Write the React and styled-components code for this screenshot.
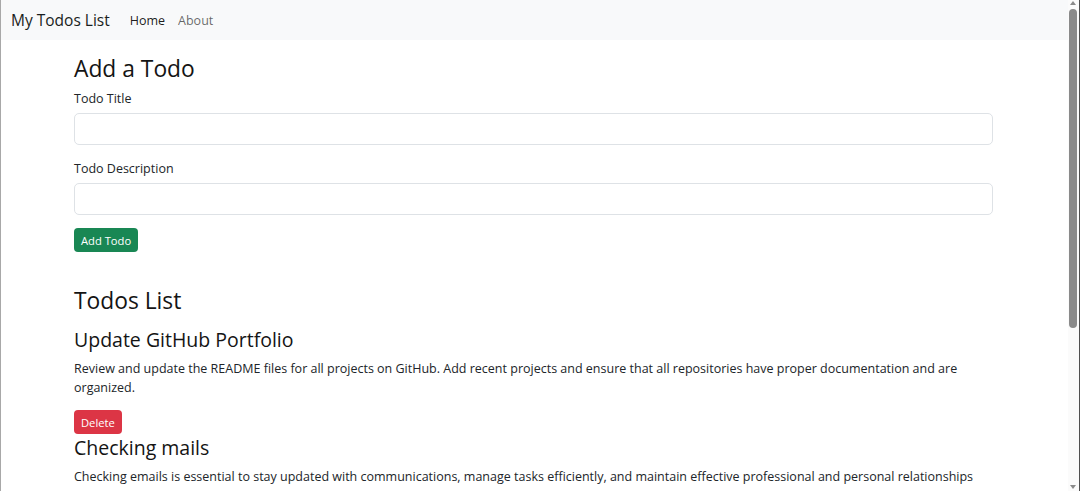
import React, { useState } from "react";
import styled, { createGlobalStyle } from "styled-components";

const GlobalStyle = createGlobalStyle`
  html, body {
    margin: 0;
    padding: 0;
    overflow: hidden;
  }
  body {
    font-family: "Open Sans", "Noto Sans", sans-serif;
    color: #212529;
    background: #ffffff;
  }
  * {
    box-sizing: border-box;
  }
`;

// window frame: page + fake scroll rail on the right
const Shell = styled.div`
  display: flex;
  width: 100vw;
  height: 100vh;
  border-left: 1px solid #a8a8a8;
  border-right: 1px solid #505050;
`;

const Page = styled.div`
  flex: 1;
  min-width: 0;
  overflow: hidden;
`;

const ScrollRail = styled.div`
  position: relative;
  width: 11px;
  background: #fbfbfb;
`;

const ScrollThumb = styled.div`
  position: absolute;
  left: 1px;
  top: 9px;
  width: 8px;
  height: 319px;
  border-radius: 4px;
  background: #8a8a8a;
`;

const ScrollArrow = styled.div`
  position: absolute;
  left: 2px;
  width: 0;
  height: 0;
  border-left: 3.5px solid transparent;
  border-right: 3.5px solid transparent;
  ${(p) =>
    p.$down
      ? "bottom: 2px; border-top: 4px solid #8a8a8a;"
      : "top: 1px; border-bottom: 4px solid #8a8a8a;"}
`;

const Navbar = styled.nav`
  height: 40px;
  background-color: #f8f9fa;
  display: flex;
  align-items: center;
  padding: 0 10px;
`;

const Brand = styled.a`
  font-size: 15.5px;
  color: #1a1d20;
  text-decoration: none;
  margin-right: 20px;
`;

const NavLinks = styled.div`
  display: flex;
  gap: 13px;
`;

const NavLink = styled.a`
  font-size: 12.5px;
  text-decoration: none;
  color: ${(p) => (p.$active ? "rgba(0, 0, 0, 0.9)" : "rgba(0, 0, 0, 0.6)")};
`;

const Body = styled.div`
  padding-right: 2px;
`;

const Container = styled.main`
  width: 919px;
  margin: 0 auto;
  padding-top: 15px;
`;

const Heading = styled.h3`
  font-size: 22.8px;
  font-weight: 500;
  line-height: 27px;
  color: #141414;
  margin: 0 0 ${(p) => p.$gap || 6}px;
`;

const FormGroup = styled.div`
  margin-bottom: ${(p) => p.$gap || 14}px;
`;

const Label = styled.label`
  display: block;
  font-size: 12.5px;
  line-height: 19px;
  margin-bottom: 5px;
`;

const Input = styled.input`
  display: block;
  width: 100%;
  height: 32px;
  border: 1px solid #dee2e6;
  border-radius: 5px;
  padding: 0 10px;
  font: inherit;
  font-size: 12.5px;
  outline: none;
`;

const Button = styled.button`
  display: block;
  height: 24px;
  padding: 0 7px;
  font-family: inherit;
  font-size: 11.2px;
  color: #ffffff;
  border: none;
  border-radius: 4px;
  cursor: pointer;
  background-color: ${(p) => (p.$variant === "danger" ? "#dc3545" : "#198754")};
`;

const ListSection = styled.section`
  margin-top: 35px;
`;

const TodoItem = styled.div`
  margin-bottom: 2px;
`;

const TodoTitle = styled.h4`
  font-size: 19.5px;
  font-weight: 500;
  line-height: 24px;
  color: #141414;
  margin: 0 0 7px;
`;

const TodoDesc = styled.p`
  font-size: 12.5px;
  line-height: 19px;
  margin: 0 0 13px;
`;

const initialTodos = [
  {
    sno: 1,
    title: "Update GitHub Portfolio",
    desc: "Review and update the README files for all projects on GitHub. Add recent projects and ensure that all repositories have proper documentation and are organized.",
  },
  {
    sno: 2,
    title: "Checking mails",
    desc: "Checking emails is essential to stay updated with communications, manage tasks efficiently, and maintain effective professional and personal relationships",
  },
];

export default function App() {
  const [todos, setTodos] = useState(initialTodos);
  const [title, setTitle] = useState("");
  const [desc, setDesc] = useState("");

  const onAdd = (e) => {
    e.preventDefault();
    if (!title || !desc) return;
    setTodos((prev) => [...prev, { sno: prev.length + 1, title, desc }]);
    setTitle("");
    setDesc("");
  };

  const onDelete = (sno) => {
    setTodos((prev) => prev.filter((t) => t.sno !== sno));
  };

  return (
    <>
      <GlobalStyle />
      <Shell>
        <Page>
          <Navbar>
            <Brand href="#">My Todos List</Brand>
            <NavLinks>
              <NavLink href="#" $active>Home</NavLink>
              <NavLink href="#">About</NavLink>
            </NavLinks>
          </Navbar>
          <Body>
            <Container>
              <Heading $gap={7}>Add a Todo</Heading>
              <form onSubmit={onAdd}>
                <FormGroup>
                  <Label htmlFor="title">Todo Title</Label>
                  <Input id="title" value={title} onChange={(e) => setTitle(e.target.value)} />
                </FormGroup>
                <FormGroup $gap={13}>
                  <Label htmlFor="desc">Todo Description</Label>
                  <Input id="desc" value={desc} onChange={(e) => setDesc(e.target.value)} />
                </FormGroup>
                <Button type="submit">Add Todo</Button>
              </form>
              <ListSection>
                <Heading $gap={14}>Todos List</Heading>
                {todos.map((todo) => (
                  <TodoItem key={todo.sno}>
                    <TodoTitle>{todo.title}</TodoTitle>
                    <TodoDesc>{todo.desc}</TodoDesc>
                    <Button $variant="danger" onClick={() => onDelete(todo.sno)}>
                      Delete
                    </Button>
                  </TodoItem>
                ))}
              </ListSection>
            </Container>
          </Body>
        </Page>
        <ScrollRail>
          <ScrollArrow />
          <ScrollThumb />
          <ScrollArrow $down />
        </ScrollRail>
      </Shell>
    </>
  );
}
